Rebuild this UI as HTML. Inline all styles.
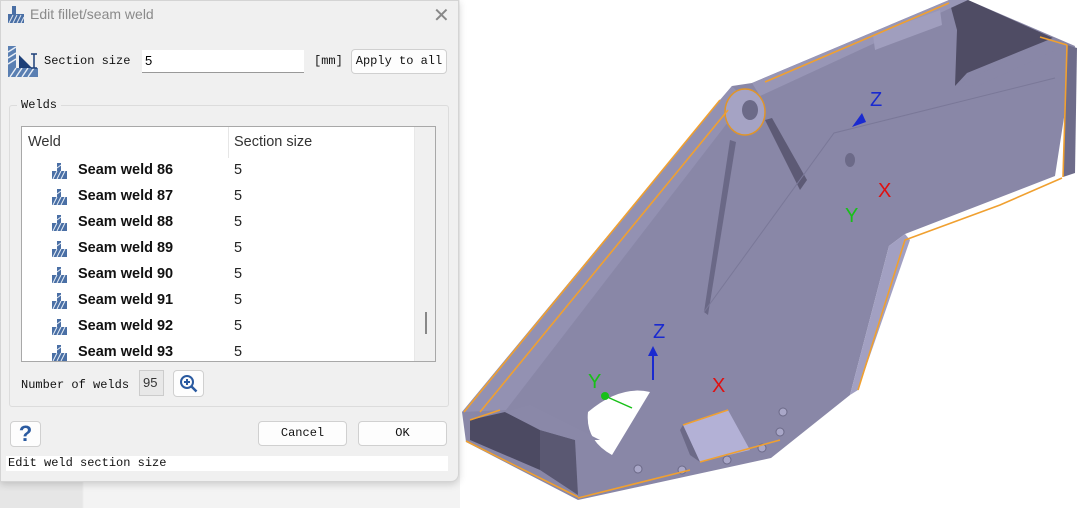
<!DOCTYPE html>
<html><head><meta charset="utf-8"><style>
*{margin:0;padding:0;box-sizing:border-box}
body{width:1080px;height:508px;overflow:hidden;background:#fff;position:relative;font-family:"Liberation Sans",sans-serif}
.mono{font-family:"Liberation Mono","DejaVu Sans Mono",monospace;font-size:12px;color:#111}
#bg{position:absolute;left:0;top:0;width:460px;height:508px;background:linear-gradient(90deg,#e6e6e6 0,#e6e6e6 82px,#f3f3f3 84px)}
#dlg{position:absolute;left:0;top:0;width:459px;height:482px;background:#f0f0f0;border:1px solid #d4d4d4;border-radius:0 0 8px 0;box-shadow:0 2px 8px rgba(0,0,0,.18)}
.abs{position:absolute}
.btn{position:absolute;background:#fdfdfd;border:1px solid #d0d0d0;border-radius:4px;text-align:center}
.row{position:absolute;left:26px;height:26px;font-size:14.5px;font-weight:bold;color:#111}
.row span.v{position:absolute;left:186px;font-weight:normal;color:#222}
</style></head><body>
<div id="bg"></div>
<div id="dlg">
 <svg class="abs" style="left:5px;top:5px" width="20" height="18" viewBox="0 0 20 18"><g fill="#4a6fa5"><rect x="6" y="0" width="4" height="8"/><rect x="2" y="8" width="16" height="9"/></g><g stroke="#dfe6f0" stroke-width="1"><path d="M3 17l4-8M7 17l4-8M11 17l4-8M15 17l3-6"/></g></svg>
 <div class="abs" style="left:29px;top:5px;font-size:14px;color:#8a8a8a">Edit fillet/seam weld</div>
 <div class="abs" style="left:432px;top:2px;font-size:20px;color:#888">✕</div>

 <svg class="abs" style="left:7px;top:45px" width="31" height="32" viewBox="0 0 31 32"><rect x="0" y="0" width="8" height="22" fill="#5a7fb2"/><rect x="0" y="22" width="30" height="9" fill="#5a7fb2"/><g stroke="#e8eef6" stroke-width="1.4"><path d="M0 6l8-5M0 12l8-5M0 18l8-5M2 31l6-9M8 31l6-9M14 31l6-9M20 31l6-9"/></g><path d="M11 9L24 22H11Z" fill="#1c3f78"/><path d="M26 8v14M23 8h6M23 22h6" stroke="#1c3f78" stroke-width="1.5"/></svg>
 <div class="abs mono" style="left:43px;top:53px">Section size</div>
 <div class="abs" style="left:141px;top:49px;width:162px;height:23px;background:#fff;border-bottom:1px solid #999;font-size:13px;padding:3px 3px">5</div>
 <div class="abs mono" style="left:313px;top:53px">[mm]</div>
 <div class="btn mono" style="left:350px;top:48px;width:96px;height:25px;line-height:23px">Apply to all</div>

 <div class="abs" style="left:8px;top:104px;width:440px;height:302px;border:1px solid #dcdcdc;border-radius:3px"></div>
 <div class="abs mono" style="left:16px;top:97px;background:#f0f0f0;padding:0 4px">Welds</div>

 <div class="abs" style="left:20px;top:125px;width:415px;height:236px;background:#fff;border:1px solid #a8a8a8;overflow:hidden">
  <div class="abs" style="left:0;top:0;width:392px;height:31px;font-size:14.5px;color:#333">
   <span class="abs" style="left:6px;top:7px">Weld</span>
   <span class="abs" style="left:206px;top:0;height:31px;border-left:1px solid #e6e6e6"></span>
   <span class="abs" style="left:212px;top:7px">Section size</span>
  </div>
  <div class="abs" style="left:392px;top:0;width:22px;height:236px;background:#f0f0f0;border-left:1px solid #e8e8e8"></div>
  <div class="abs" style="left:403px;top:185px;width:2px;height:22px;background:#888"></div>
  <div id="rows"></div>
 </div>

 <div class="abs mono" style="left:20px;top:377px">Number of welds</div>
 <div class="abs" style="left:138px;top:369px;width:25px;height:26px;background:#e8e8e8;border:1px solid #ccc;font-size:13px;color:#333;padding:4px 3px">95</div>
 <div class="btn" style="left:172px;top:369px;width:31px;height:27px"><svg width="20" height="20" viewBox="0 0 20 20" style="margin-top:3px"><circle cx="8" cy="8" r="6" fill="none" stroke="#2a5aa0" stroke-width="2"/><path d="M5 8h6M8 5v6" stroke="#2a5aa0" stroke-width="2"/><path d="M12.5 12.5l5 5" stroke="#2a5aa0" stroke-width="2.5"/></svg></div>

 <div class="btn" style="left:9px;top:420px;width:31px;height:26px;font-size:22px;font-weight:bold;color:#2a5aa0;line-height:24px">?</div>
 <div class="btn mono" style="left:257px;top:420px;width:89px;height:25px;line-height:23px">Cancel</div>
 <div class="btn mono" style="left:357px;top:420px;width:89px;height:25px;line-height:23px">OK</div>
 <div class="abs mono" style="left:5px;top:455px;width:442px;height:15px;background:#fff;line-height:15px;padding-left:2px">Edit weld section size</div>
</div>

<svg class="abs" style="left:460px;top:0" width="620" height="508" viewBox="460 0 620 508">
 <polygon points="462,412 466,442 578,500 771,458 850,395 889,246 905,234 1055,176 1075,46 968,0 949,0 752,83 732,86 720,100" fill="#8987a7"/>
 <polygon points="462,412 720,100 732,86 745,100 506,410" fill="#9391b2"/>
 <polygon points="968,0 1053,38 967,73 955,86 957,30 949,0" fill="#4f4c64"/>
 <polygon points="955,86 1053,38 1067,45 980,85" fill="#8987a7"/>
 <polygon points="1067,45 1077,48 1075,173 1063,177" fill="#6e6c8a"/>
 <polygon points="752,83 949,0 968,0 760,96" fill="#9896b6"/>
 <polygon points="873,35 940,10 942,25 875,50" fill="#a09ebe"/>
 <polygon points="889,246 905,234 910,240 858,390 850,395" fill="#a2a0c2"/>
 <polygon points="765,120 772,118 807,180 800,190" fill="#5d5a75"/>
 <polygon points="704,312 730,140 736,142 708,315" fill="#6a6886"/>
 <path d="M704,312 L834,133 L1055,78" fill="none" stroke="#7a7898" stroke-width="1"/>
 <ellipse cx="745" cy="112" rx="20" ry="23" fill="#a5a3c4" stroke="#e0952a" stroke-width="1.5"/>
 <ellipse cx="750" cy="110" rx="8" ry="10" fill="#6c6a88"/>
 <ellipse cx="850" cy="160" rx="5" ry="7" fill="#6c6a88"/>
 <path d="M588,412 Q620,385 650,392 L612,455 Q585,440 588,412Z" fill="#fff"/>
 <polygon points="470,420 505,412 540,430 540,470 470,440" fill="#4c4a62"/>
 <polygon points="540,430 575,440 578,495 540,470" fill="#5a5872"/>
 <polygon points="505,412 530,405 600,440 575,440 540,430" fill="#8a88a8"/>
 <polygon points="683,425 728,410 750,450 700,462" fill="#b3b1d6"/>
 <polygon points="683,425 700,462 690,455 680,430" fill="#6c6a88"/>
 <g fill="#a9a7c8" stroke="#6c6a88" stroke-width="1">
  <circle cx="638" cy="469" r="4"/><circle cx="682" cy="470" r="4"/><circle cx="727" cy="460" r="4"/><circle cx="762" cy="448" r="4"/><circle cx="780" cy="432" r="4"/><circle cx="783" cy="412" r="4"/>
 </g>
 <g fill="none" stroke="#f0a030" stroke-width="1.6">
  <path d="M464,412 L720,100"/><path d="M480,412 L728,110"/>
  <path d="M765,82 L949,3"/>
  <path d="M578,498 L690,470"/><path d="M700,462 L780,440"/>
  <path d="M858,390 L905,240 L1000,205 L1062,178"/>
  <path d="M1063,177 L1067,45"/><path d="M1040,37 L1067,45"/>
  <path d="M466,441 L578,497"/><path d="M470,420 L500,410"/>
  <path d="M683,425 L728,410"/>
 </g>
 <path d="M653,380 V352" stroke="#1a2ad0" stroke-width="2"/><polygon points="648,356 653,346 658,356" fill="#1a2ad0"/>
 <text x="653" y="338" font-family="Liberation Sans" font-size="20" fill="#1a2ad0">Z</text>
 <path d="M605,396 L632,408" stroke="#18c018" stroke-width="1.5"/><circle cx="605" cy="396" r="4" fill="#18c018"/>
 <text x="588" y="388" font-family="Liberation Sans" font-size="20" fill="#18c018">Y</text>
 <text x="712" y="392" font-family="Liberation Sans" font-size="20" fill="#e01010">X</text>
 <polygon points="852,127 862,113 866,122" fill="#1a2ad0"/>
 <text x="870" y="106" font-family="Liberation Sans" font-size="20" fill="#1a2ad0">Z</text>
 <text x="845" y="222" font-family="Liberation Sans" font-size="20" fill="#18c018">Y</text>
 <text x="878" y="197" font-family="Liberation Sans" font-size="20" fill="#e01010">X</text>
</svg>

<script>
var h='';for(var i=0;i<8;i++){var y=32+i*26;
h+='<div class="row" style="top:'+y+'px;width:380px"><svg style="position:absolute;left:3px;top:4px" width="17" height="17" viewBox="0 0 17 17"><rect x="6" y="0" width="4" height="8" fill="#4a6fa5"/><rect x="1" y="8" width="15" height="8" fill="#4a6fa5"/><path d="M2 16l4-8M6 16l4-8M10 16l4-8M6 5l4-3" stroke="#e8eef6"/></svg><span style="position:absolute;left:30px;top:3px">Seam weld '+(86+i)+'</span><span class="v" style="top:3px">5</span></div>';}
document.getElementById('rows').innerHTML=h;
</script>
</body></html>
